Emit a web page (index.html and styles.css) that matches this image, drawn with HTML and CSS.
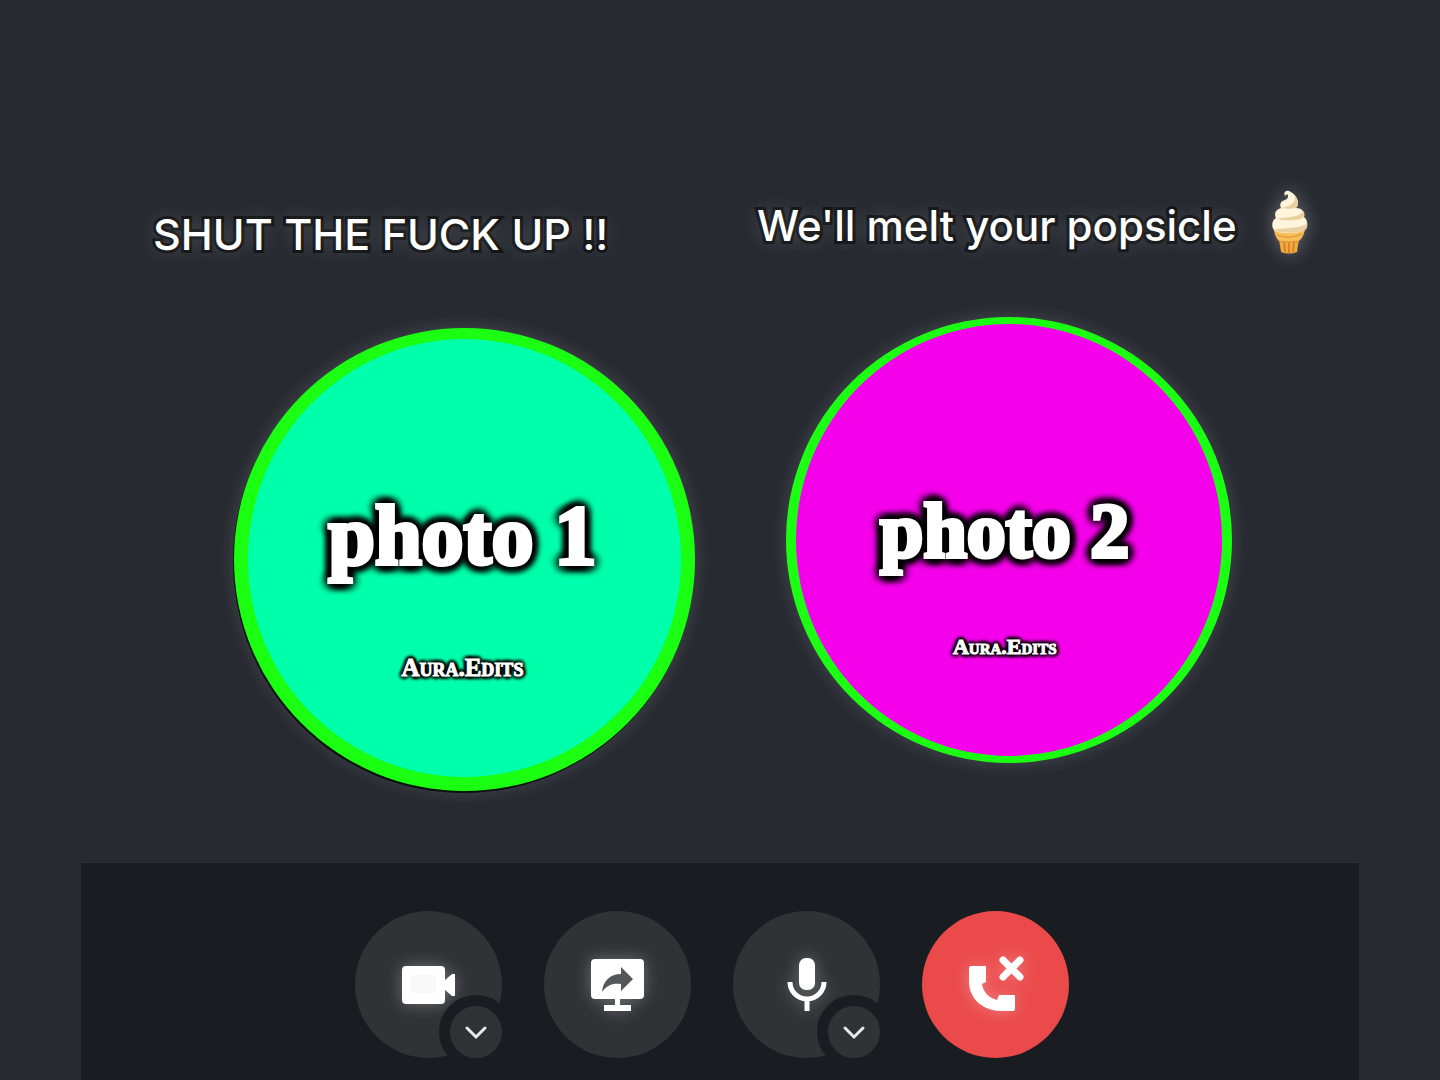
FILE: index.html
```
<!DOCTYPE html>
<html lang="en">
<head>
    <meta charset="UTF-8">
    <meta name="viewport" content="width=device-width, initial-scale=1.0">
    <title>Group Call</title>
    <link rel="stylesheet" href="styles.css">
</head>
<body>
    <main class="stage">
        <section class="participant first">
            <p class="caption">SHUT THE FUCK UP !!</p>
            <div class="avatar">
                <h2>photo 1</h2>
                <span class="tag">Aura.Edits</span>
            </div>
        </section>
        <section class="participant second">
            <p class="caption">We'll melt your popsicle
                <svg class="cone" viewBox="0 0 36 64" role="img" aria-label="Ice cream">
                    <path d="M7 49H27L25 62Q17 65 9 62Z" fill="#f2a93f"/>
                    <path d="M12 51L13 62M17 51V63M22 51L21 62" stroke="#c97c20" stroke-width="1.5"/>
                    <path d="M2 40H33Q31 48 27 51Q17 54 7 51Q3 47 2 40Z" fill="#f7bd58"/>
                    <path d="M5 45Q17 50 30 44M7 51Q17 53 27 51" fill="none" stroke="#dd9130"/>
                    <path d="M13 6C11 2 14 0 17 1C22 3 26 8 26 13C26 15 25 17 24 18C30 18 33 22 32 27C36 30 36 36 34 39C29 44 7 45 2 40C-1 36 0 30 4 28C2 24 3 20 9 18C7 14 9 11 13 10C16 9 17 6 15 4Z" fill="#fff4dc"/>
                    <path d="M23 6C24 14 17 16 9 18Q21 20 25 17C27 13 26 9 23 6ZM31 21C29 27 16 27 4 29Q22 32 31 28Q34 24 31 21ZM35 33C30 39 14 37 2 40C8 44 29 44 34 39Q36 36 35 33Z" fill="#ead0a0"/>
                </svg>
            </p>
            <div class="avatar">
                <h2>photo 2</h2>
                <span class="tag">Aura.Edits</span>
            </div>
        </section>
    </main>

    <footer class="controls">
        <div class="control">
            <button class="round" type="button" aria-label="Turn on camera">
                <svg viewBox="0 0 147 147">
                    <rect x="47" y="55" width="43" height="38" rx="4"/>
                    <path d="M89 70L97 63H100V85H97L89 78Z"/>
                    <rect x="56" y="64" width="25" height="18" rx="2" fill="#f8f9f8"/>
                </svg>
            </button>
            <button class="more" type="button" aria-label="Camera options">
                <svg viewBox="0 0 52 52"><path d="M17 22L26 31L35 22"/></svg>
            </button>
        </div>
        <div class="control">
            <button class="round" type="button" aria-label="Share your screen">
                <svg viewBox="0 0 147 147">
                    <path d="M51 48H96Q100 48 100 52V84Q100 88 96 88H76V94H87V100H60V94H71V88H51Q47 88 47 84V52Q47 48 51 48Z"/>
                    <path d="M58 81C59 70 66 63 77 63V56L89 68L77 80V73C69 72 63 74 58 81Z" fill="#55575a"/>
                </svg>
            </button>
        </div>
        <div class="control">
            <button class="round" type="button" aria-label="Mute">
                <svg viewBox="0 0 147 147">
                    <rect x="66" y="47" width="16" height="32" rx="7"/>
                    <path d="M57 71A17 17 0 0 0 91 71M74 88V100" fill="none" stroke="#fff" stroke-width="5"/>
                </svg>
            </button>
            <button class="more" type="button" aria-label="Microphone options">
                <svg viewBox="0 0 52 52"><path d="M17 22L26 31L35 22"/></svg>
            </button>
        </div>
        <div class="control">
            <button class="round hangup" type="button" aria-label="Leave call">
                <svg viewBox="0 0 147 147">
                    <path d="M47 57Q47 55 49 55H64V71L60 73C61 81 67 87 75 89L77 84H93V98Q93 100 91 100H80C61 100 47 88 47 70Z"/>
                    <path d="M81 49L98 66M98 49L81 66" stroke="#fff" stroke-width="7" stroke-linecap="round"/>
                </svg>
            </button>
        </div>
    </footer>
</body>
</html>
```
FILE: styles.css
```
* {
    box-sizing: border-box;
}

body {
    font-family: 'Inter', sans-serif;
    background-color: #272a31;
    color: #fff;
    margin: 0;
    min-height: 100vh;
    display: flex;
    flex-direction: column;
}

.stage {
    flex: 1;
    display: grid;
    grid-template-columns: 1fr 1fr;
}

.participant {
    display: flex;
    flex-direction: column;
    align-items: flex-start;
}

.first {
    padding-top: 204px;
}

.second {
    padding-top: 190px;
}

.caption {
    display: flex;
    align-items: center;
    gap: 35px;
    margin: 0;
    font-size: 42px;
    font-weight: 500;
    line-height: 60px;
    white-space: nowrap;
    paint-order: stroke fill;
    stroke-linejoin: round;
    -webkit-text-stroke: 6px #111213;
    text-shadow: 0 0 20px rgba(255, 255, 255, 0.25);
}

.first .caption {
    margin: 0 0 64px 153px;
    font-size: 43px;
}

.second .caption {
    height: 64px;
    margin: 0 0 63px 37px;
    padding-top: 8px;
}

.cone {
    width: 36px;
    height: 64px;
    margin-top: -8px;
    filter: drop-shadow(0 0 9px rgba(255, 255, 255, 0.3));
}

.avatar {
    border-radius: 50%;
    display: flex;
    flex-direction: column;
    align-items: center;
    border-style: solid;
    border-color: #1bff12;
}

.first .avatar {
    width: 64%;
    aspect-ratio: 461 / 463;
    margin-left: 234px;
    padding-right: 4px;
    border-width: 11px 14px 14px;
    background-color: #00ffaa;
    box-shadow: -1px 2px 0 #07140b, 0 0 18px rgba(255, 255, 255, 0.15);
}

.second .avatar {
    width: 62%;
    aspect-ratio: 1;
    margin-left: 66px;
    padding-right: 9px;
    border-width: 7px 10px;
    background-color: #f500eb;
    box-shadow: 0 0 18px rgba(255, 255, 255, 0.15);
}

.avatar h2 {
    margin: 0;
    font-family: 'Liberation Serif', serif;
    font-weight: bold;
    line-height: 90px;
    -webkit-text-stroke: 4px #fff;
    text-shadow: 7px 0 6px #000, -7px 0 6px #000, 0 7px 6px #000, 0 -7px 6px #000,
        5px 5px 6px #000, -5px 5px 6px #000, 5px -5px 6px #000, -5px -5px 6px #000,
        0 0 4px #000, 0 0 8px #000;
}

.first h2 {
    margin-top: 152px;
    font-size: 84px;
}

.second h2 {
    margin-top: 162px;
    font-size: 78px;
}

.tag {
    font-family: 'Liberation Serif', serif;
    font-weight: bold;
    font-variant: small-caps;
    line-height: 32px;
    -webkit-text-stroke: 1px #fff;
    text-shadow: 3px 0 3px #000, -3px 0 3px #000, 0 3px 3px #000, 0 -3px 3px #000,
        2px 2px 3px #000, -2px 2px 3px #000, 2px -2px 3px #000, -2px -2px 3px #000;
}

.first .tag {
    margin-top: 71px;
    font-size: 25px;
}

.second .tag {
    margin-top: 55px;
    font-size: 22px;
}

.controls {
    display: flex;
    justify-content: center;
    gap: 42px;
    margin: 0 81px;
    padding: 48px 17px 22px 0;
    background-color: #191c20;
    box-shadow: 0 0 2px #303236;
}

.control {
    position: relative;
}

button {
    display: block;
    padding: 0;
    border: none;
    border-radius: 50%;
    background-color: #303236;
    cursor: pointer;
}

.round {
    width: 147px;
    height: 147px;
}

.round svg {
    display: block;
    fill: #fff;
    filter: drop-shadow(0 0 8px rgba(255, 255, 255, 0.3));
}

.hangup {
    background-color: #eb4a4b;
}

/* ring in the bar colour cuts into the big button */
.more {
    position: absolute;
    right: -11px;
    bottom: -11px;
    width: 74px;
    height: 74px;
    border: 11px solid #191c20;
}

.more svg {
    display: block;
    fill: none;
    stroke: #e9eaea;
    stroke-width: 3;
    stroke-linecap: round;
}
```
